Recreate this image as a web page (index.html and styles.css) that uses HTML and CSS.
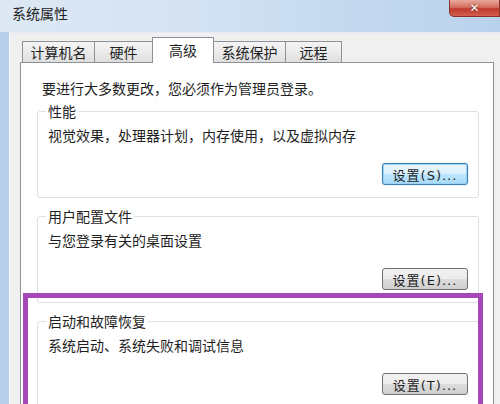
FILE: index.html
```html
<!DOCTYPE html>
<html lang="zh-CN">
<head>
    <meta charset="UTF-8">
    <meta name="viewport" content="width=device-width, initial-scale=1.0">
    <title>系统属性</title>
    <link rel="stylesheet" href="styles.css">
</head>
<body>
    <div class="window">
        <div class="titlebar">
            <span class="title">系统属性</span>
            <div class="close">✕</div>
        </div>
        <div class="frame">
            <div class="dialog">
                <div class="tabs">
                    <div class="tab tab-name">计算机名</div>
                    <div class="tab tab-hw">硬件</div>
                    <div class="tab tab-adv active">高级</div>
                    <div class="tab tab-prot">系统保护</div>
                    <div class="tab tab-remote">远程</div>
                </div>

                <div class="panel">
                    <p class="intro">要进行大多数更改，您必须作为管理员登录。</p>

                    <fieldset class="group">
                        <legend>性能</legend>
                        <p class="desc">视觉效果，处理器计划，内存使用，以及虚拟内存</p>
                        <button class="btn focused">设置(S)...</button>
                    </fieldset>

                    <fieldset class="group">
                        <legend>用户配置文件</legend>
                        <p class="desc">与您登录有关的桌面设置</p>
                        <button class="btn">设置(E)...</button>
                    </fieldset>

                    <fieldset class="group">
                        <legend>启动和故障恢复</legend>
                        <p class="desc">系统启动、系统失败和调试信息</p>
                        <button class="btn">设置(T)...</button>
                    </fieldset>
                </div>
            </div>
        </div>

        <!-- highlight box drawn over the screenshot -->
        <div class="mark"></div>
    </div>
</body>
</html>
```

FILE: styles.css
```css
body {
    margin: 0;
    padding: 0;
    font-family: "Noto Sans CJK SC", sans-serif;
    font-size: 14px;
    color: #1e1e1e;
}

.window {
    position: relative;
    width: 500px;
    height: 404px;
    overflow: hidden;
    background: #b8cfe9;
}

.titlebar {
    height: 32px;
    display: flex;
    align-items: flex-start;
    padding-left: 12px;
    background: linear-gradient(to right, #dde8f4 0%, #d3e2f2 40%, #c4d9ef 70%, #b9d2ec 100%);
}

.title {
    line-height: 26px;
    font-size: 14px;
    color: #222;
}

.close {
    margin-left: auto;
    width: 51px;
    height: 17px;
    box-sizing: border-box;
    border: 1px solid #8a3228;
    border-top: none;
    border-radius: 0 0 0 5px;
    background: linear-gradient(to bottom, #e8a99d 0%, #d4705f 45%, #c0392b 55%, #d2604f 100%);
    color: #fff;
    font-family: "DejaVu Sans", sans-serif;
    font-weight: bold;
    font-size: 12px;
    line-height: 16px;
    text-align: center;
    text-shadow: 0 0 2px #5a1a12;
}

.frame {
    padding-left: 9px;
}

.dialog {
    height: 372px;
    box-sizing: border-box;
    border-left: 1px solid #f4f8fc;
    border-top: 1px solid #e4edf7;
    background: #f0f0f0;
    padding: 4px 6px 0 10px;
}

.tabs {
    height: 25px;
    display: flex;
    align-items: flex-end;
    padding-left: 2px;
}

.tab {
    box-sizing: border-box;
    height: 21px;
    margin-left: -1px;
    border: 1px solid #8e9297;
    border-bottom: none;
    background: linear-gradient(to bottom, #f4f4f4 0%, #ebebeb 50%, #dedede 100%);
    text-align: center;
    line-height: 20px;
    font-size: 14px;
}

.tab:first-child {
    margin-left: 0;
}

.tab-name { width: 73px; }
.tab-hw { width: 59px; }
.tab-adv { width: 62px; }
.tab-prot { width: 73px; }
.tab-remote { width: 57px; }

.tab.active {
    position: relative;
    z-index: 1;
    height: 26px;
    margin-bottom: -1px;
    background: #fff;
    line-height: 24px;
}

.panel {
    box-sizing: border-box;
    height: 360px;
    border: 1px solid #8e9297;
    background: #fff;
    padding: 0 14px 0 16px;
}

.intro {
    margin: 15px 0 0 5px;
    line-height: 20px;
}

.group {
    margin: 9px 0 0 0;
    padding: 5px 10px 12px 10px;
    border: 1px solid #dbe0e4;
    border-radius: 3px;
}

.group:first-of-type {
    margin-top: 4px;
}

.group legend {
    padding: 0 2px;
    margin-left: -2px;
    line-height: 18px;
}

.desc {
    margin: 0;
    line-height: 20px;
}

.btn {
    display: block;
    margin: 18px 0 0 auto;
    width: 86px;
    height: 22px;
    padding: 0;
    border: 1px solid #707070;
    border-radius: 3px;
    background: linear-gradient(to bottom, #f2f2f2 0%, #ebebeb 50%, #dddddd 51%, #cfcfcf 100%);
    font-family: "DejaVu Sans", "Noto Sans CJK SC", sans-serif;
    font-size: 13px;
    letter-spacing: 1px;
    color: #1e1e1e;
    text-align: center;
}

.btn.focused {
    border-color: #3c7fb1;
    background: linear-gradient(to bottom, #eaf6fd 0%, #d9f0fc 50%, #bee6fd 51%, #a7d9f5 100%);
    box-shadow: inset 0 0 0 1px #9bd3f5, 0 0 1px #48a3e0;
}

.mark {
    position: absolute;
    left: 23px;
    top: 293px;
    width: 460px;
    height: 130px;
    box-sizing: border-box;
    border: 5px solid #a648b8;
}
```
